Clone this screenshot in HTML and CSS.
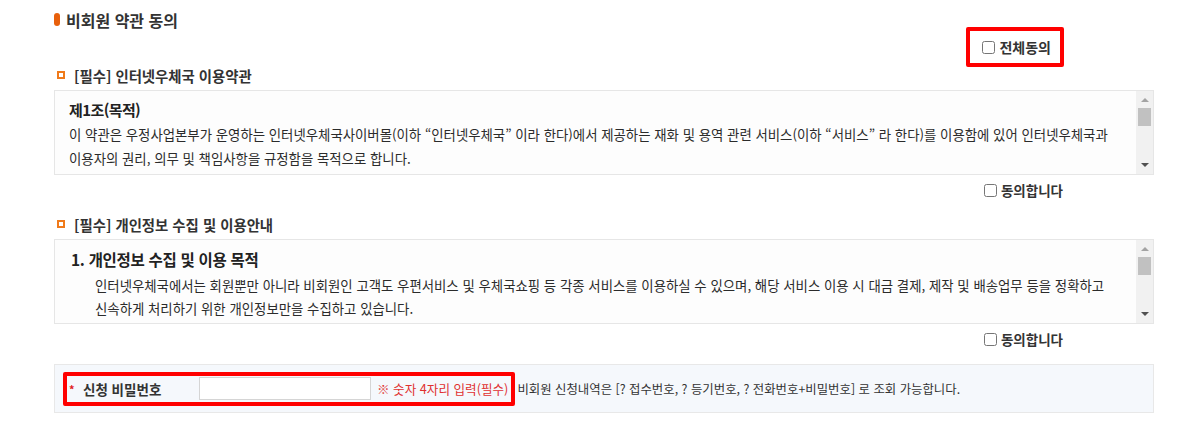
FILE: index.html
```html
<!DOCTYPE html>
<html lang="ko">
<head>
  <meta charset="UTF-8" />
  <title>비회원 약관 동의</title>
  <link rel="stylesheet" href="styles.css">
</head>
<body>
  <div class="wrap">

    <!-- 타이틀 -->
    <h2 class="page-title"><span class="title-bar"></span>비회원 약관 동의</h2>

    <div class="agree-all-row">
      <label class="agree-all mark"><input type="checkbox"> 전체동의</label>
    </div>

    <!-- 이용약관 -->
    <h3 class="sub-title"><span class="sq"></span>[필수] 인터넷우체국 이용약관</h3>
    <div class="terms-box">
      <div class="terms-body">
        <h4 class="art">제1조(목적)</h4>
        <p>이 약관은 우정사업본부가 운영하는 인터넷우체국사이버몰(이하 “인터넷우체국” 이라 한다)에서 제공하는 재화 및 용역 관련 서비스(이하 “서비스” 라 한다)를 이용함에 있어 인터넷우체국과<br>이용자의 권리, 의무 및 책임사항을 규정함을 목적으로 합니다.</p>
      </div>
      <div class="fake-scroll">
        <span class="arr up"></span>
        <span class="thumb"></span>
        <span class="arr down"></span>
      </div>
    </div>
    <div class="agree-row">
      <label class="agree"><input type="checkbox"> 동의합니다</label>
    </div>

    <!-- 개인정보 -->
    <h3 class="sub-title second"><span class="sq"></span>[필수] 개인정보 수집 및 이용안내</h3>
    <div class="terms-box">
      <div class="terms-body">
        <h4 class="num">1. 개인정보 수집 및 이용 목적</h4>
        <p class="indent">인터넷우체국에서는 회원뿐만 아니라 비회원인 고객도 우편서비스 및 우체국쇼핑 등 각종 서비스를 이용하실 수 있으며, 해당 서비스 이용 시 대금 결제, 제작 및 배송업무 등을 정확하고<br>신속하게 처리하기 위한 개인정보만을 수집하고 있습니다.</p>
      </div>
      <div class="fake-scroll">
        <span class="arr up"></span>
        <span class="thumb"></span>
        <span class="arr down"></span>
      </div>
    </div>
    <div class="agree-row">
      <label class="agree"><input type="checkbox"> 동의합니다</label>
    </div>

    <!-- 비밀번호 -->
    <div class="pw-box">
      <div class="pw-field mark">
        <span class="star">*</span>
        <label class="pw-label" for="pw">신청 비밀번호</label>
        <input type="password" id="pw" class="pw-input">
        <span class="pw-note">※ 숫자 4자리 입력(필수)</span>
      </div>
      <span class="pw-info">비회원 신청내역은 [? 접수번호, ? 등기번호, ? 전화번호+비밀번호] 로 조회 가능합니다.</span>
    </div>

  </div>
</body>
</html>
```

FILE: styles.css
```css
* {
  box-sizing: border-box;
}

body {
  margin: 0;
  font-family: "Noto Sans CJK KR", "Noto Sans", sans-serif;
  color: #333;
  background-color: #fff;
}

.wrap {
  width: 1100px;
  margin-left: 54px;
}

/* 타이틀 */
.page-title {
  display: flex;
  align-items: center;
  margin: 0;
  padding-top: 12px;
  height: 27px;
  font-size: 16px;
  line-height: 16px;
  font-weight: bold;
  color: #333;
}

.title-bar {
  display: inline-block;
  width: 6px;
  height: 13px;
  margin-right: 6px;
  border-radius: 3px;
  background-color: #e8600c;
}

/* 빨간 강조 박스 */
.mark {
  border: 4px solid #ff0000;
  border-radius: 2px;
}

.agree-all-row {
  display: flex;
  justify-content: flex-end;
  padding-right: 90px;
}

.agree-all {
  display: flex;
  align-items: center;
  height: 40px;
  padding: 0 9px 0 12px;
  font-size: 14px;
  font-weight: bold;
}

input[type="checkbox"] {
  width: 13px;
  height: 13px;
  margin: 0 4px 0 0;
}

/* 소제목 */
.sub-title {
  display: flex;
  align-items: center;
  margin: 0 0 7px;
  height: 16px;
  font-size: 14.4px;
  font-weight: bold;
  color: #333;
}

.sub-title.second {
  margin-top: 11px;
}

.sq {
  display: inline-block;
  width: 8px;
  height: 8px;
  margin: 0 9px 0 3px;
  border: 2px solid #f07a1a;
}

/* 약관 박스 */
.terms-box {
  display: flex;
  height: 85px;
  border: 1px solid #e6e6e6;
  background-color: #fdfdfd;
}

.terms-body {
  flex: 1;
  overflow: hidden;
  padding: 7px 14px 0 14px;
}

.terms-body h4 {
  margin: 0;
  font-size: 15.5px;
  line-height: 24px;
  font-weight: bold;
  color: #222;
  letter-spacing: -0.3px;
}

.terms-body h4.art {
  font-size: 15px;
  letter-spacing: -0.6px;
}

.terms-body h4.num {
  padding-left: 2px;
}

.terms-body p {
  margin: 0;
  font-size: 13.4px;
  line-height: 24px;
  color: #2b2b2b;
}

.terms-body p.indent {
  margin-top: 3px;
  padding-left: 26px;
  line-height: 23px;
}

.fake-scroll {
  display: flex;
  flex-direction: column;
  align-items: center;
  width: 17px;
  background-color: #f1f1f1;
}

.arr {
  width: 0;
  height: 0;
  border-left: 4px solid transparent;
  border-right: 4px solid transparent;
}

.arr.up {
  margin-top: 7px;
  border-bottom: 4px solid #a3a3a3;
}

.arr.down {
  margin-top: auto;
  margin-bottom: 7px;
  border-top: 4px solid #505050;
}

.thumb {
  width: 13px;
  height: 18px;
  margin-top: 6px;
  background-color: #c1c1c1;
}

/* 동의 */
.agree-row {
  display: flex;
  justify-content: flex-end;
  align-items: center;
  height: 30px;
  padding-right: 91px;
}

.agree {
  display: flex;
  align-items: center;
  font-size: 13.5px;
  font-weight: bold;
  color: #333;
}

/* 비밀번호 */
.pw-box {
  display: flex;
  align-items: center;
  margin-top: 10px;
  height: 49px;
  padding: 0 8px;
  border: 1px solid #e8e8e8;
  background-color: #f5f8fc;
  font-size: 12.4px;
}

.pw-field {
  display: flex;
  align-items: center;
  height: 34px;
  padding: 0 3px 0 2px;
  margin-right: 2px;
}

.star {
  width: 14px;
  color: #e02020;
  font-size: 11px;
  font-weight: bold;
}

.pw-label {
  width: 116px;
  font-size: 13.5px;
  font-weight: bold;
  color: #333;
}

.pw-input {
  width: 172px;
  height: 23px;
  margin: 0 6px 0 0;
  border: 1px solid #d5d5d5;
  background-color: #fff;
}

.pw-note {
  color: #e03030;
  font-size: 12.6px;
}

.pw-info {
  color: #333;
}
```
